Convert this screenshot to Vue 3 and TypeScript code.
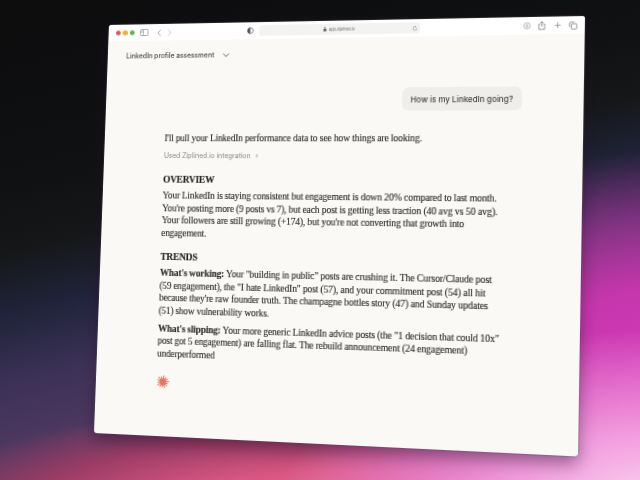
<script setup lang="ts">
// long and short rays alternate so the spark looks hand drawn
const rays = Array.from({ length: 14 }, (_, i) => ({
  angle: (i * 360) / 14 + 8,
  tip: i % 3 === 0 ? 0.4 : i % 3 === 1 ? 1.4 : 0.9,
}))
</script>

<template>
  <div class="desktop">
    <svg class="grain" width="640" height="480">
      <filter id="grain-noise">
        <feTurbulence type="fractalNoise" baseFrequency="0.9" numOctaves="2" />
        <feColorMatrix values="0 0 0 0 0.5  0 0 0 0 0.5  0 0 0 0 0.5  0 0 0 0.6 0" />
      </filter>
      <rect width="640" height="480" filter="url(#grain-noise)" />
    </svg>

    <div class="window">
      <header class="toolbar">
        <div class="lights">
          <span class="light red"></span>
          <span class="light yellow"></span>
          <span class="light green"></span>
        </div>
        <svg class="icon sidebar" width="9" height="7" viewBox="0 0 9 7" fill="none" stroke="#888" stroke-width=".7">
          <rect x=".5" y=".5" width="8" height="6" rx=".8" />
          <path d="M3.4 .6v5.8M1.3 2h1.2M1.3 3.2h1.2" />
        </svg>
        <svg class="icon back" width="5" height="8" viewBox="0 0 5 8" fill="none" stroke="#888" stroke-width=".8">
          <path d="M4 .8 1 4l3 3.2" />
        </svg>
        <svg class="icon forward" width="5" height="8" viewBox="0 0 5 8" fill="none" stroke="#c4c4c4" stroke-width=".8">
          <path d="M1 .8 4 4 1 7.2" />
        </svg>
        <svg class="icon shield" width="7" height="7" viewBox="0 0 7 7">
          <circle cx="3.5" cy="3.5" r="2.9" fill="none" stroke="#555" stroke-width=".7" />
          <path d="M3.5 .6a2.9 2.9 0 0 0 0 5.8z" fill="#555" />
        </svg>
        <div class="address">
          <span class="url">
            <svg width="4" height="5" viewBox="0 0 5 6"><rect x=".6" y="2.5" width="3.8" height="3" rx=".5" fill="#666" /><path d="M1.4 2.6V1.7a1.1 1.1 0 0 1 2.2 0v.9" fill="none" stroke="#666" stroke-width=".6" /></svg>
            app.ziplined.io
          </span>
          <svg class="reload" width="6" height="6" viewBox="0 0 7 7" fill="none" stroke="#888" stroke-width=".6">
            <path d="M5.6 3.6a2.2 2.2 0 1 1-1-1.9M4.2 .9l.5.9-.9.4" />
          </svg>
        </div>
        <div class="actions">
          <svg width="7" height="7" viewBox="0 0 7 7" fill="none" stroke="#888" stroke-width=".6">
            <circle cx="3.5" cy="3.5" r="2.9" />
            <path d="M3.5 1.8v3M2.3 3.7l1.2 1.1 1.2-1.1" />
          </svg>
          <svg width="7" height="9" viewBox="0 0 7 9" fill="none" stroke="#777" stroke-width=".7">
            <path d="M2.2 3H.8v5.2h5.4V3H4.8M3.5 5.4V.7M2.1 1.9 3.5 .7l1.4 1.2" />
          </svg>
          <svg width="7" height="7" viewBox="0 0 7 7" fill="none" stroke="#888" stroke-width=".7">
            <path d="M3.5 .6v5.8M.6 3.5h5.8" />
          </svg>
          <svg width="8" height="8" viewBox="0 0 8 8" fill="none" stroke="#777" stroke-width=".7">
            <rect x="2.4" y="2.2" width="5" height="5.2" rx=".8" />
            <path d="M.7 5.2V1.5C.7 1 1 .7 1.5 .7h3.7" />
          </svg>
        </div>
      </header>

      <main class="page">
        <div class="title-row">
          <span class="title">LinkedIn profile assessment</span>
          <svg width="8" height="6" viewBox="0 0 8 6" fill="none" stroke="#555" stroke-width=".9">
            <path d="M1 1.4 4 4.4l3-3" />
          </svg>
        </div>

        <div class="bubble-row">
          <div class="bubble">How is my LinkedIn going?</div>
        </div>

        <article class="answer">
          <p class="intro">I'll pull your LinkedIn performance data to see how things are looking.</p>
          <p class="tool">Used Ziplined.io integration <span class="caret">›</span></p>

          <h2>OVERVIEW</h2>
          <p>
            Your LinkedIn is staying consistent but engagement is down 20% compared to last month.<br />
            You're posting more (9 posts vs 7), but each post is getting less traction (40 avg vs 50 avg).<br />
            Your followers are still growing (+174), but you're not converting that growth into<br />
            engagement.
          </p>

          <h2 class="later">TRENDS</h2>
          <p>
            <strong>What's working:</strong> Your "building in public" posts are crushing it. The Cursor/Claude post<br />
            (59 engagement), the "I hate LinkedIn" post (57), and your commitment post (54) all hit<br />
            because they're raw founder truth. The champagne bottles story (47) and Sunday updates<br />
            (51) show vulnerability works.
          </p>
          <p>
            <strong>What's slipping:</strong> Your more generic LinkedIn advice posts (the "1 decision that could 10x"<br />
            post got 5 engagement) are falling flat. The rebuild announcement (24 engagement)<br />
            underperformed
          </p>

          <svg class="spark" width="14" height="14" viewBox="0 0 14 14">
            <circle cx="7" cy="7" r="3.4" fill="#e07a5f" />
            <line
              v-for="r in rays"
              :key="r.angle"
              x1="7"
              y1="7"
              x2="7"
              :y2="r.tip"
              stroke="#e07a5f"
              stroke-width="1"
              :transform="`rotate(${r.angle} 7 7)`"
            />
          </svg>
        </article>
      </main>
    </div>
  </div>
</template>

<style>
html,
body {
  margin: 0;
  background: #0a0a0b;
}
</style>

<style scoped>
.desktop {
  position: relative;
  width: 640px;
  height: 480px;
  overflow: hidden;
  background:
    radial-gradient(380px 170px at 660px 500px, #fbd4f2 0%, rgba(248, 170, 228, 0.85) 40%, rgba(240, 120, 210, 0) 100%),
    radial-gradient(380px 250px at 680px 400px, #d83cbc 0%, rgba(204, 53, 176, 0.95) 45%, rgba(160, 40, 150, 0) 100%),
    radial-gradient(450px 130px at 340px 530px, #f07098 0%, #d85580 45%, rgba(170, 60, 100, 0.8) 75%, rgba(150, 50, 90, 0) 100%),
    linear-gradient(166deg, #0b0b0c 0%, #0f1012 30%, #141618 40%, #20233a 50%, #3a3055 60%, #503860 72%, #5a3a60 100%);
}

.grain {
  position: absolute;
  top: 0;
  left: 0;
  opacity: 0.08;
  mix-blend-mode: overlay;
}

.window {
  position: absolute;
  top: 0;
  left: 0;
  display: flex;
  flex-direction: column;
  width: 480px;
  height: 416px;
  border-radius: 3px;
  overflow: hidden;
  background: #faf9f5;
  box-shadow: 0 7px 16px rgba(40, 10, 40, 0.45), 0 0 0 0.5px rgba(110, 110, 110, 0.5);
  transform-origin: 0 0;
  transform: matrix3d(0.90289, -0.021178, 0, -0.00015175, -0.040031, 0.962469, 0, -0.00004227, 0, 0, 1, 0, 109, 25, 0, 1);
  font-family: "Inter", "Noto Sans", sans-serif;
}

.toolbar {
  position: relative;
  display: flex;
  flex: none;
  align-items: center;
  height: 17px;
  padding: 0 7px 0 8px;
  background: #ffffff;
}

.lights {
  display: flex;
  gap: 2px;
  margin-right: 6px;
}

.light {
  width: 5.4px;
  height: 5.4px;
  border-radius: 50%;
}

.red {
  background: #df5f4d;
}

.yellow {
  background: #ecb03f;
}

.green {
  background: #5fb354;
}

.icon {
  flex: none;
}

.back {
  margin-left: 9px;
}

.forward {
  margin-left: 6px;
}

.shield {
  margin-left: 79px;
}

.address {
  display: flex;
  flex: none;
  align-items: center;
  justify-content: center;
  position: relative;
  width: 162px;
  height: 11px;
  margin-left: 6px;
  border-radius: 3px;
  background: #f3f3f1;
}

.url {
  display: flex;
  align-items: center;
  gap: 2px;
  font-size: 3.8px;
  color: #666;
}

.reload {
  position: absolute;
  right: 2px;
  top: 2.5px;
}

.actions {
  display: flex;
  align-items: center;
  gap: 7.5px;
  margin-left: auto;
}

.page {
  flex: 1;
  padding: 11px 58px 0 20px;
  color: #2e2c28;
  filter: blur(0.2px);
}

.title-row {
  display: flex;
  align-items: center;
  gap: 8px;
}

.title {
  font-size: 7px;
  font-weight: 500;
  color: #4a4844;
}

.bubble-row {
  display: flex;
  justify-content: flex-end;
  margin-top: 30px;
}

.bubble {
  padding: 5.5px 8.5px;
  border-radius: 7px;
  background: #efeeea;
  font-size: 7.8px;
  font-weight: 500;
  line-height: 12px;
  color: #45433f;
}

.answer {
  margin: 21px 0 0 44px;
  font-family: "Liberation Serif", "Times New Roman", serif;
  font-size: 9.7px;
  letter-spacing: -0.17px;
  line-height: 12.4px;
  -webkit-text-stroke: 0.12px currentColor;
}

.answer p {
  margin: 0 0 6px;
  white-space: nowrap;
}

.answer .tool {
  margin: 5px 0 10px;
  font-family: "Inter", "Noto Sans", sans-serif;
  font-size: 7px;
  letter-spacing: 0;
  color: #8b8984;
  -webkit-text-stroke: 0;
}

.caret {
  margin-left: 3px;
}

.answer h2 {
  margin: 0 0 4.5px;
  font-size: 9.8px;
  font-weight: 700;
  line-height: 13px;
  color: #1d1b18;
}

.answer h2.later {
  margin-top: 11px;
}

.spark {
  display: block;
  margin: 15px 0 0 -0.5px;
}
</style>
